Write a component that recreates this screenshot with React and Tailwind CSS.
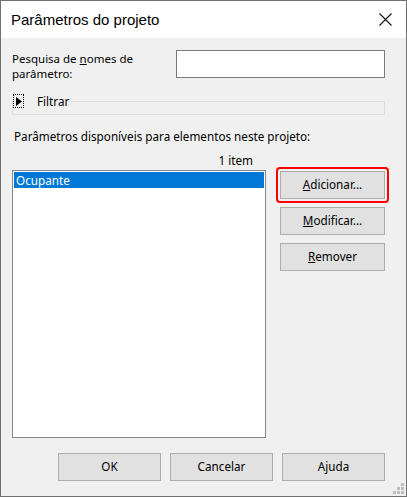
import React from "react";

const font = { fontFamily: '"Noto Sans", "Liberation Sans", Arial, sans-serif' };
const titleFont = { fontFamily: '"Liberation Sans", Arial, sans-serif' };

function Btn({ children, className = "" }) {
  return (
    <div
      className={
        "flex items-center justify-center bg-[#e1e1e1] border border-[#adadad] text-[11.7px] text-black " +
        className
      }
    >
      {children}
    </div>
  );
}

export default function App() {
  return (
    <div
      className="relative w-[407px] h-[497px] border border-[#707070] bg-[#f0f0f0] flex flex-col text-black"
      style={font}
    >
      {/* Title bar */}
      <div className="h-[37px] bg-white flex items-center justify-between pl-[10px] pr-[14px]">
        <span className="text-[15px] leading-none" style={titleFont}>Parâmetros do projeto</span>
        <svg width="13" height="13" viewBox="0 0 13 13">
          <path d="M0.5 0.5 L12.5 12.5 M12.5 0.5 L0.5 12.5" stroke="#111" strokeWidth="1.1" />
        </svg>
      </div>

      {/* Body */}
      <div className="flex-1 flex flex-col px-[11px]">
        {/* Search row */}
        <div className="flex justify-between mt-[12px]">
          <div className="text-[11.5px] leading-[15px] pt-[1px]">
            Pesquisa de <span className="underline">n</span>omes de
            <br />
            parâmetro:
          </div>
          <div className="w-[209px] h-[28px] bg-white border border-[#7a7a7a] mr-[10px]" />
        </div>

        {/* Filtrar */}
        <div className="relative mt-[12px] h-[23px]">
          <div className="absolute left-0 right-[10px] top-[8px] h-[14px] border border-[#dcdcdc]" />
          <div className="absolute left-[1px] top-0 flex items-center bg-[#f0f0f0] pr-[2px]">
            <div className="w-[11px] h-[14px] border border-dotted border-black flex items-center justify-center">
              <svg width="6" height="9" viewBox="0 0 6 9">
                <path d="M0 0 L6 4.5 L0 9 Z" fill="#000" />
              </svg>
            </div>
            <span className="text-[11.7px] leading-[16px] ml-[13px]">Filtrar</span>
          </div>
        </div>

        {/* Available params label */}
        <div className="text-[11.7px] leading-[15px] mt-[13px] ml-[2px]">
          Parâmetros disponíveis para elementos neste projeto:
        </div>
        <div className="w-[254px] text-right pr-[13px] text-[11.7px] leading-[15px] mt-[9px]">
          1 item
        </div>

        {/* List + side buttons */}
        <div className="flex mt-[2px]">
          <div className="w-[254px] h-[268px] bg-white border border-[#828790] p-[1px]">
            <div className="h-[16px] bg-[#0078d7] text-white text-[11.7px] leading-[16px] pl-[2px]">
              Ocupante
            </div>
          </div>
          <div className="ml-[10px] flex flex-col">
            <div className="border-2 border-[#ff0000] rounded-[4px] p-[2px] mt-[-3px]">
              <Btn className="w-[105px] h-[28px]">
                <span>
                  <span className="underline">A</span>dicionar...
                </span>
              </Btn>
            </div>
            <Btn className="w-[105px] h-[28px] ml-[4px] mt-[4px]">
              <span>
                <span className="underline">M</span>odificar...
              </span>
            </Btn>
            <Btn className="w-[105px] h-[28px] ml-[4px] mt-[8px]">
              <span>
                <span className="underline">R</span>emover
              </span>
            </Btn>
          </div>
        </div>

        {/* Bottom buttons */}
        <div className="flex justify-end gap-[9px] mt-[15px] mr-[10px]">
          <Btn className="w-[103px] h-[28px]">OK</Btn>
          <Btn className="w-[103px] h-[28px]">Cancelar</Btn>
          <Btn className="w-[103px] h-[28px]">Ajuda</Btn>
        </div>
      </div>

      {/* Size grip */}
      <svg className="absolute right-[1px] bottom-[1px]" width="12" height="12" viewBox="0 0 12 12">
        <rect x="8" y="0" width="3" height="3" fill="#bcbcbc" />
        <rect x="4" y="4" width="3" height="3" fill="#bcbcbc" />
        <rect x="8" y="4" width="3" height="3" fill="#bcbcbc" />
        <rect x="0" y="8" width="3" height="3" fill="#bcbcbc" />
        <rect x="4" y="8" width="3" height="3" fill="#bcbcbc" />
        <rect x="8" y="8" width="3" height="3" fill="#bcbcbc" />
      </svg>
    </div>
  );
}
